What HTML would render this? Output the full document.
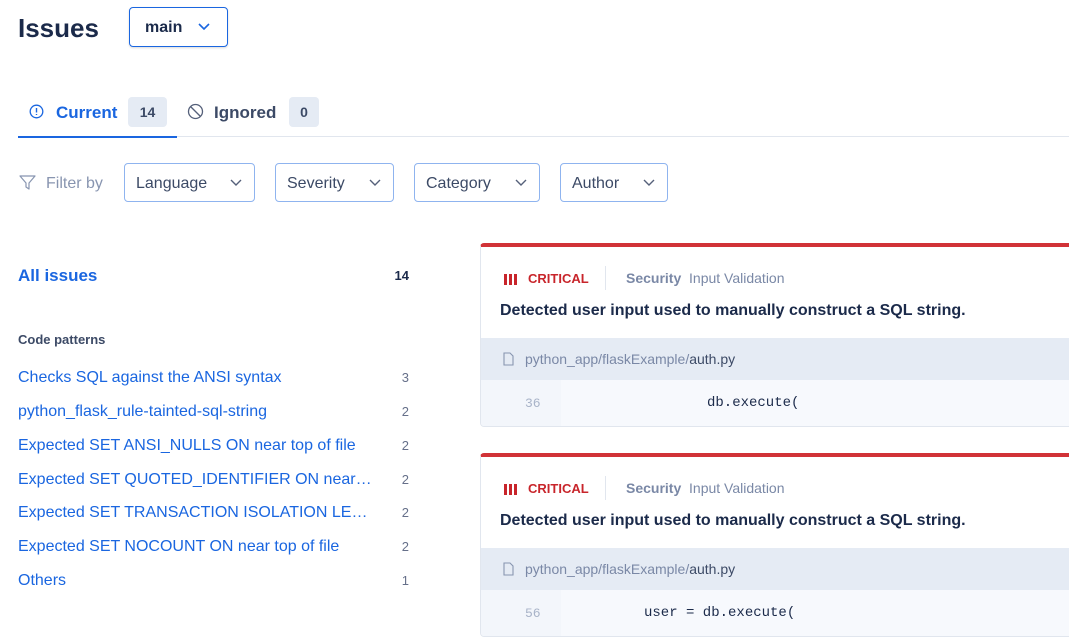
<!DOCTYPE html>
<html><head><style>
*{margin:0;padding:0;box-sizing:border-box}
body{width:1069px;height:638px;overflow:hidden;background:#fff;font-family:"Liberation Sans",sans-serif;color:#1b2a4a;position:relative}
.a{position:absolute;white-space:nowrap}
.dd{position:absolute;height:39px;border:1px solid #8fb4ef;border-radius:4px;font-size:16px;color:#3c4a66;padding:0 0 0 11px;line-height:39px}
.dd svg{position:absolute;right:12px;top:15px}
.li{position:absolute;left:18px;font-size:16px;color:#1a66e0;white-space:nowrap}
.cn{position:absolute;left:380px;width:29px;text-align:right;font-size:13px;color:#66708a}
.card{position:absolute;left:480px;width:600px;height:184px;border:1px solid #e1e6ee;border-top:4px solid #d13237;border-radius:4px 0 0 4px;overflow:hidden}
.card .h{position:absolute;top:24px;left:24px;font-size:13px;color:#c8252b;font-weight:bold}
.card .bars{position:absolute;top:27px;left:23px}
.card .sep{position:absolute;top:19px;left:124px;width:1px;height:24px;background:#e1e6ee}
.card .sec{position:absolute;top:23px;left:145px;font-size:14px;color:#7a88a6}
.card .t{position:absolute;top:55px;left:19px;font-size:16px;font-weight:bold;color:#1b2a4a}
.card .f{position:absolute;top:91px;left:0;right:0;height:42px;background:#e5ebf4;font-size:14px;color:#7a88a6;line-height:42px;padding-left:44px}
.card .f b{font-weight:normal;color:#3c4a66}
.card .c{position:absolute;top:133px;left:0;right:0;bottom:0;background:#f7f9fd}
.card .ln{position:absolute;left:0;top:0;bottom:0;width:80px;background:#f3f6fb;font-family:"Liberation Mono",monospace;font-size:13px;color:#a8b3c8;padding:16px 0 0 44px}
.card .code{position:absolute;top:15px;font-family:"Liberation Mono",monospace;font-size:14px;color:#1b2a4a}
</style></head><body>
<div class="a" style="left:18px;top:13px;font-size:26px;font-weight:bold;color:#1b2a4a">Issues</div>
<div class="a" style="left:129px;top:7px;width:99px;height:40px;border:1px solid #1a66e0;border-radius:4px;box-shadow:0 1px 2px rgba(0,0,0,.15)"><span class="a" style="left:15px;top:11px;font-size:16px;font-weight:bold">main</span><svg class="a" style="left:68px;top:15px" width="12" height="8" viewBox="0 0 12 8"><path d="M1 1l5 5 5-5" fill="none" stroke="#1a66e0" stroke-width="1.6"/></svg></div>

<svg class="a" style="left:29px;top:104px" width="15" height="15" viewBox="0 0 15 15"><circle cx="7.5" cy="7.5" r="6.3" fill="none" stroke="#1a66e0" stroke-width="1.3"/><path d="M7.5 4v4.5M7.5 10v1" stroke="#1a66e0" stroke-width="1.4"/></svg>
<div class="a" style="left:56px;top:103px;font-size:17px;font-weight:bold;color:#1a66e0">Current</div>
<div class="a" style="left:128px;top:97px;width:39px;height:30px;background:#e5ebf4;border-radius:4px;font-size:14px;font-weight:bold;color:#3c4a66;text-align:center;line-height:31px">14</div>
<svg class="a" style="left:187px;top:103px" width="17" height="17" viewBox="0 0 17 17"><circle cx="8.5" cy="8.5" r="7" fill="none" stroke="#55607a" stroke-width="1.3"/><path d="M3.5 3.5l10 10" stroke="#55607a" stroke-width="1.3"/></svg>
<div class="a" style="left:214px;top:103px;font-size:17px;font-weight:bold;color:#3c4a66">Ignored</div>
<div class="a" style="left:289px;top:97px;width:30px;height:30px;background:#e5ebf4;border-radius:4px;font-size:14px;font-weight:bold;color:#3c4a66;text-align:center;line-height:31px">0</div>
<div class="a" style="left:18px;top:136px;width:1051px;height:1px;background:#e1e6ee"></div>
<div class="a" style="left:18px;top:136px;width:159px;height:2px;background:#1a66e0"></div>

<svg class="a" style="left:19px;top:175px" width="17" height="16" viewBox="0 0 17 16"><path d="M1 1h15l-6 7v6l-3-2v-4z" fill="none" stroke="#8895b0" stroke-width="1.2" stroke-linejoin="round"/></svg>
<div class="a" style="left:46px;top:175px;font-size:16px;color:#8895b0">Filter by</div>
<div class="dd" style="left:124px;top:163px;width:131px">Language<svg width="12" height="8" viewBox="0 0 12 8"><path d="M1 1l5 5 5-5" fill="none" stroke="#55607a" stroke-width="1.4"/></svg></div>
<div class="dd" style="left:275px;top:163px;width:119px">Severity<svg width="12" height="8" viewBox="0 0 12 8"><path d="M1 1l5 5 5-5" fill="none" stroke="#55607a" stroke-width="1.4"/></svg></div>
<div class="dd" style="left:414px;top:163px;width:126px">Category<svg width="12" height="8" viewBox="0 0 12 8"><path d="M1 1l5 5 5-5" fill="none" stroke="#55607a" stroke-width="1.4"/></svg></div>
<div class="dd" style="left:560px;top:163px;width:108px">Author<svg width="12" height="8" viewBox="0 0 12 8"><path d="M1 1l5 5 5-5" fill="none" stroke="#55607a" stroke-width="1.4"/></svg></div>

<div class="li" style="top:266px;font-weight:bold;font-size:17px">All issues</div>
<div class="cn" style="top:268px;font-weight:bold;color:#1b2a4a">14</div>
<div class="a" style="left:18px;top:332px;font-size:13px;font-weight:bold;color:#3c4a66">Code patterns</div>
<div class="li" style="top:369px">Checks SQL against the ANSI syntax</div><div class="cn" style="top:370px">3</div>
<div class="li" style="top:403px">python_flask_rule-tainted-sql-string</div><div class="cn" style="top:404px">2</div>
<div class="li" style="top:437px">Expected SET ANSI_NULLS ON near top of file</div><div class="cn" style="top:438px">2</div>
<div class="li" style="top:471px">Expected SET QUOTED_IDENTIFIER ON near…</div><div class="cn" style="top:472px">2</div>
<div class="li" style="top:504px">Expected SET TRANSACTION ISOLATION LE…</div><div class="cn" style="top:505px">2</div>
<div class="li" style="top:538px">Expected SET NOCOUNT ON near top of file</div><div class="cn" style="top:539px">2</div>
<div class="li" style="top:572px">Others</div><div class="cn" style="top:573px">1</div>

<div class="card" style="top:243px">
<svg class="bars" width="14" height="11"><rect x="0" y="0" width="3" height="11" fill="#c8252b"/><rect x="5" y="0" width="3" height="11" fill="#c8252b"/><rect x="10" y="0" width="3" height="11" fill="#c8252b"/></svg>
<div class="h" style="left:47px">CRITICAL</div><div class="sep"></div>
<div class="sec"><b>Security</b>&nbsp; Input Validation</div>
<div class="t">Detected user input used to manually construct a SQL string.</div>
<div class="f"><svg class="a" style="left:22px;top:14px" width="11" height="14" viewBox="0 0 11 14"><path d="M1 1h6l3 3v9H1z" fill="none" stroke="#8895b0" stroke-width="1.1"/></svg>python_app/flaskExample/<b>auth.py</b></div>
<div class="c"><div class="ln">36</div><div class="code" style="left:226px">db.execute(</div></div>
</div>

<div class="card" style="top:453px">
<svg class="bars" width="14" height="11"><rect x="0" y="0" width="3" height="11" fill="#c8252b"/><rect x="5" y="0" width="3" height="11" fill="#c8252b"/><rect x="10" y="0" width="3" height="11" fill="#c8252b"/></svg>
<div class="h" style="left:47px">CRITICAL</div><div class="sep"></div>
<div class="sec"><b>Security</b>&nbsp; Input Validation</div>
<div class="t">Detected user input used to manually construct a SQL string.</div>
<div class="f"><svg class="a" style="left:22px;top:14px" width="11" height="14" viewBox="0 0 11 14"><path d="M1 1h6l3 3v9H1z" fill="none" stroke="#8895b0" stroke-width="1.1"/></svg>python_app/flaskExample/<b>auth.py</b></div>
<div class="c"><div class="ln">56</div><div class="code" style="left:163px">user = db.execute(</div></div>
</div>
</body></html>
